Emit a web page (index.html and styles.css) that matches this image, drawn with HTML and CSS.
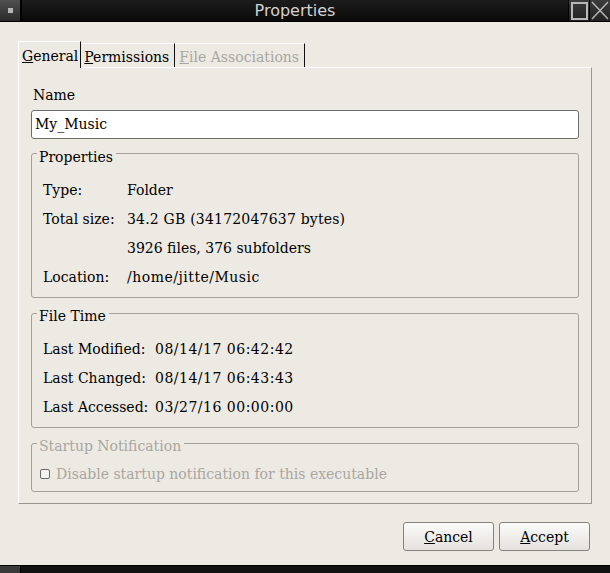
FILE: index.html
```html
<!DOCTYPE html>
<html>
<head>
<meta charset="utf-8">
<link rel="stylesheet" href="styles.css">
</head>
<body>
<div class="window">
  <div class="titlebar">
    <div class="tb-menu"><span class="tb-dot"></span></div>
    <div class="tb-title">Properties</div>
    <div class="tb-btn tb-max"><span class="max-box"></span></div>
    <div class="tb-btn tb-close">
      <svg width="20" height="21" viewBox="0 0 20 21"><path d="M2 2 L18 19 M18 2 L2 19" stroke="#b8b8b8" stroke-width="1.4" fill="none"/></svg>
    </div>
  </div>
  <div class="content">
    <div class="tabs">
      <div class="tab active"><u>G</u>eneral</div>
      <div class="tab"><u>P</u>ermissions</div>
      <div class="tab disabled"><u>F</u>ile Associations</div>
    </div>
    <div class="pane">
      <div class="name-label">Name</div>
      <div class="input">My_Music</div>
      <div class="group props">
        <div class="legend">Properties</div>
        <div class="grid grid-props">
          <div>Type:</div><div>Folder</div>
          <div>Total size:</div><div class="wide-s">34.2 GB (34172047637 bytes)</div>
          <div></div><div>3926 files, 376 subfolders</div>
          <div>Location:</div><div class="wide">/home/jitte/Music</div>
        </div>
      </div>
      <div class="group times">
        <div class="legend">File Time</div>
        <div class="grid grid-times">
          <div>Last Modified:</div><div class="wide">08/14/17 06:42:42</div>
          <div>Last Changed:</div><div class="wide">08/14/17 06:43:43</div>
          <div>Last Accessed:</div><div class="wide">03/27/16 00:00:00</div>
        </div>
      </div>
      <div class="group startup disabled">
        <div class="legend">Startup Notification</div>
        <div class="check-row"><span class="checkbox"></span><span>Disable startup notification for this executable</span></div>
      </div>
    </div>
    <div class="buttons">
      <div class="button"><u>C</u>ancel</div>
      <div class="button"><u>A</u>ccept</div>
    </div>
  </div>
  <div class="bottombar"><div class="bb-left"></div><div class="bb-mid"></div></div>
</div>
</body>
</html>
```
FILE: styles.css
```css
html, body {
  margin: 0;
  padding: 0;
}
body {
  width: 610px;
  height: 573px;
  overflow: hidden;
  background: #edeae4;
  font-family: "DejaVu Serif", serif;
  font-size: 14px;
  color: #000;
}
.window {
  display: flex;
  flex-direction: column;
  height: 573px;
}
.titlebar {
  height: 22px;
  display: flex;
  background: #000;
  border-bottom: 1px solid #000;
  box-sizing: border-box;
}
.tb-menu {
  width: 20px;
  height: 21px;
  background: linear-gradient(#505050, #2a2a2a);
  display: flex;
  align-items: center;
  justify-content: center;
}
.tb-dot {
  width: 5px;
  height: 5px;
  background: #b5b5b5;
}
.tb-title {
  flex: 1;
  margin-left: 2px;
  height: 21px;
  background: linear-gradient(#1c1c1c, #0a0a0a);
  color: #d2d2d2;
  font-family: "DejaVu Sans", sans-serif;
  font-size: 16px;
  line-height: 21px;
  text-align: center;
}
.tb-btn {
  width: 20px;
  height: 21px;
  margin-left: 1px;
  background: linear-gradient(#3c3c3c, #222);
  display: flex;
  align-items: center;
  justify-content: center;
}
.max-box {
  width: 13px;
  height: 14px;
  border: 2px solid #b8b8b8;
}
.tb-close svg { display: block; }
.content {
  flex: 1;
  padding: 19px 20px 0 18px;
}
.tabs {
  display: flex;
  height: 26px;
  align-items: flex-end;
}
.tab {
  height: 24px;
  line-height: 24px;
  padding: 1px 5px 0 3px;
  border-top: 1px solid #fff;
  border-right: 1px solid #111;
  box-sizing: border-box;
}
.tab.active {
  height: 27px;
  margin-bottom: -1px;
  border-left: 1px solid #fff;
  padding: 3px 2px 0 3px;
  line-height: 22px;
  background: #edeae4;
}
.tab.disabled { color: #a9a6a0; padding-left: 4px; padding-right: 5px; }
.pane {
  width: 574px;
  height: 437px;
  box-sizing: border-box;
  border-top: 1px solid #fff;
  border-left: 1px solid #fff;
  border-right: 1px solid #9a9792;
  border-bottom: 1px solid #9a9792;
  padding: 16px 12px 0 12px;
}
.name-label {
  height: 22px;
  line-height: 22px;
  padding-left: 2px;
}
.input {
  margin-top: 4px;
  height: 29px;
  box-sizing: border-box;
  border: 1px solid #6e6c68;
  border-radius: 3px;
  background: #fff;
  line-height: 27px;
  padding-left: 3px;
}
.group {
  box-sizing: border-box;
  border: 1px solid #a3a09b;
  border-radius: 3px;
  padding-left: 11px;
}
.legend {
  width: fit-content;
  line-height: 16px;
  height: 16px;
  margin-left: -6px;
  padding: 0 3px 0 2px;
  background: #edeae4;
}
.props { margin-top: 14px; height: 145px; }
.props .legend { margin-top: -5px; }
.times { margin-top: 15px; height: 115px; }
.times .legend { margin-top: -6px; }
.startup { margin-top: 15px; height: 49px; }
.startup .legend { margin-top: -6px; }
.grid {
  display: grid;
  grid-auto-rows: 29px;
  align-items: center;
}
.grid-props { grid-template-columns: 84px 1fr; margin-top: 10px; }
.grid-times { grid-template-columns: 112px 1fr; margin-top: 10px; }
.wide { letter-spacing: 0.5px; }
.wide-s { letter-spacing: 0.2px; }
.disabled { color: #a9a6a0; }
.check-row {
  display: flex;
  align-items: center;
  height: 20px;
  margin-left: -3px;
  margin-top: 10px;
}
.checkbox {
  width: 8px;
  height: 8px;
  border: 1px solid #6a6a6a;
  border-radius: 2px;
  background: #f4f3f0;
  margin-right: 6px;
}
.buttons {
  display: flex;
  justify-content: flex-end;
  gap: 5px;
  margin-top: 18px;
}
.button {
  width: 91px;
  height: 29px;
  box-sizing: border-box;
  border: 1px solid #86837f;
  border-radius: 3px;
  background: linear-gradient(#fbfbfa, #e4e2dd);
  text-align: center;
  line-height: 28px;
}
.bottombar {
  height: 7px;
  display: flex;
  background: #000;
  border-top: 1px solid #000;
}
.bb-left { width: 20px; background: #3a3a3a; }
.bb-mid { flex: 1; margin-left: 1px; background: #111; }
```
